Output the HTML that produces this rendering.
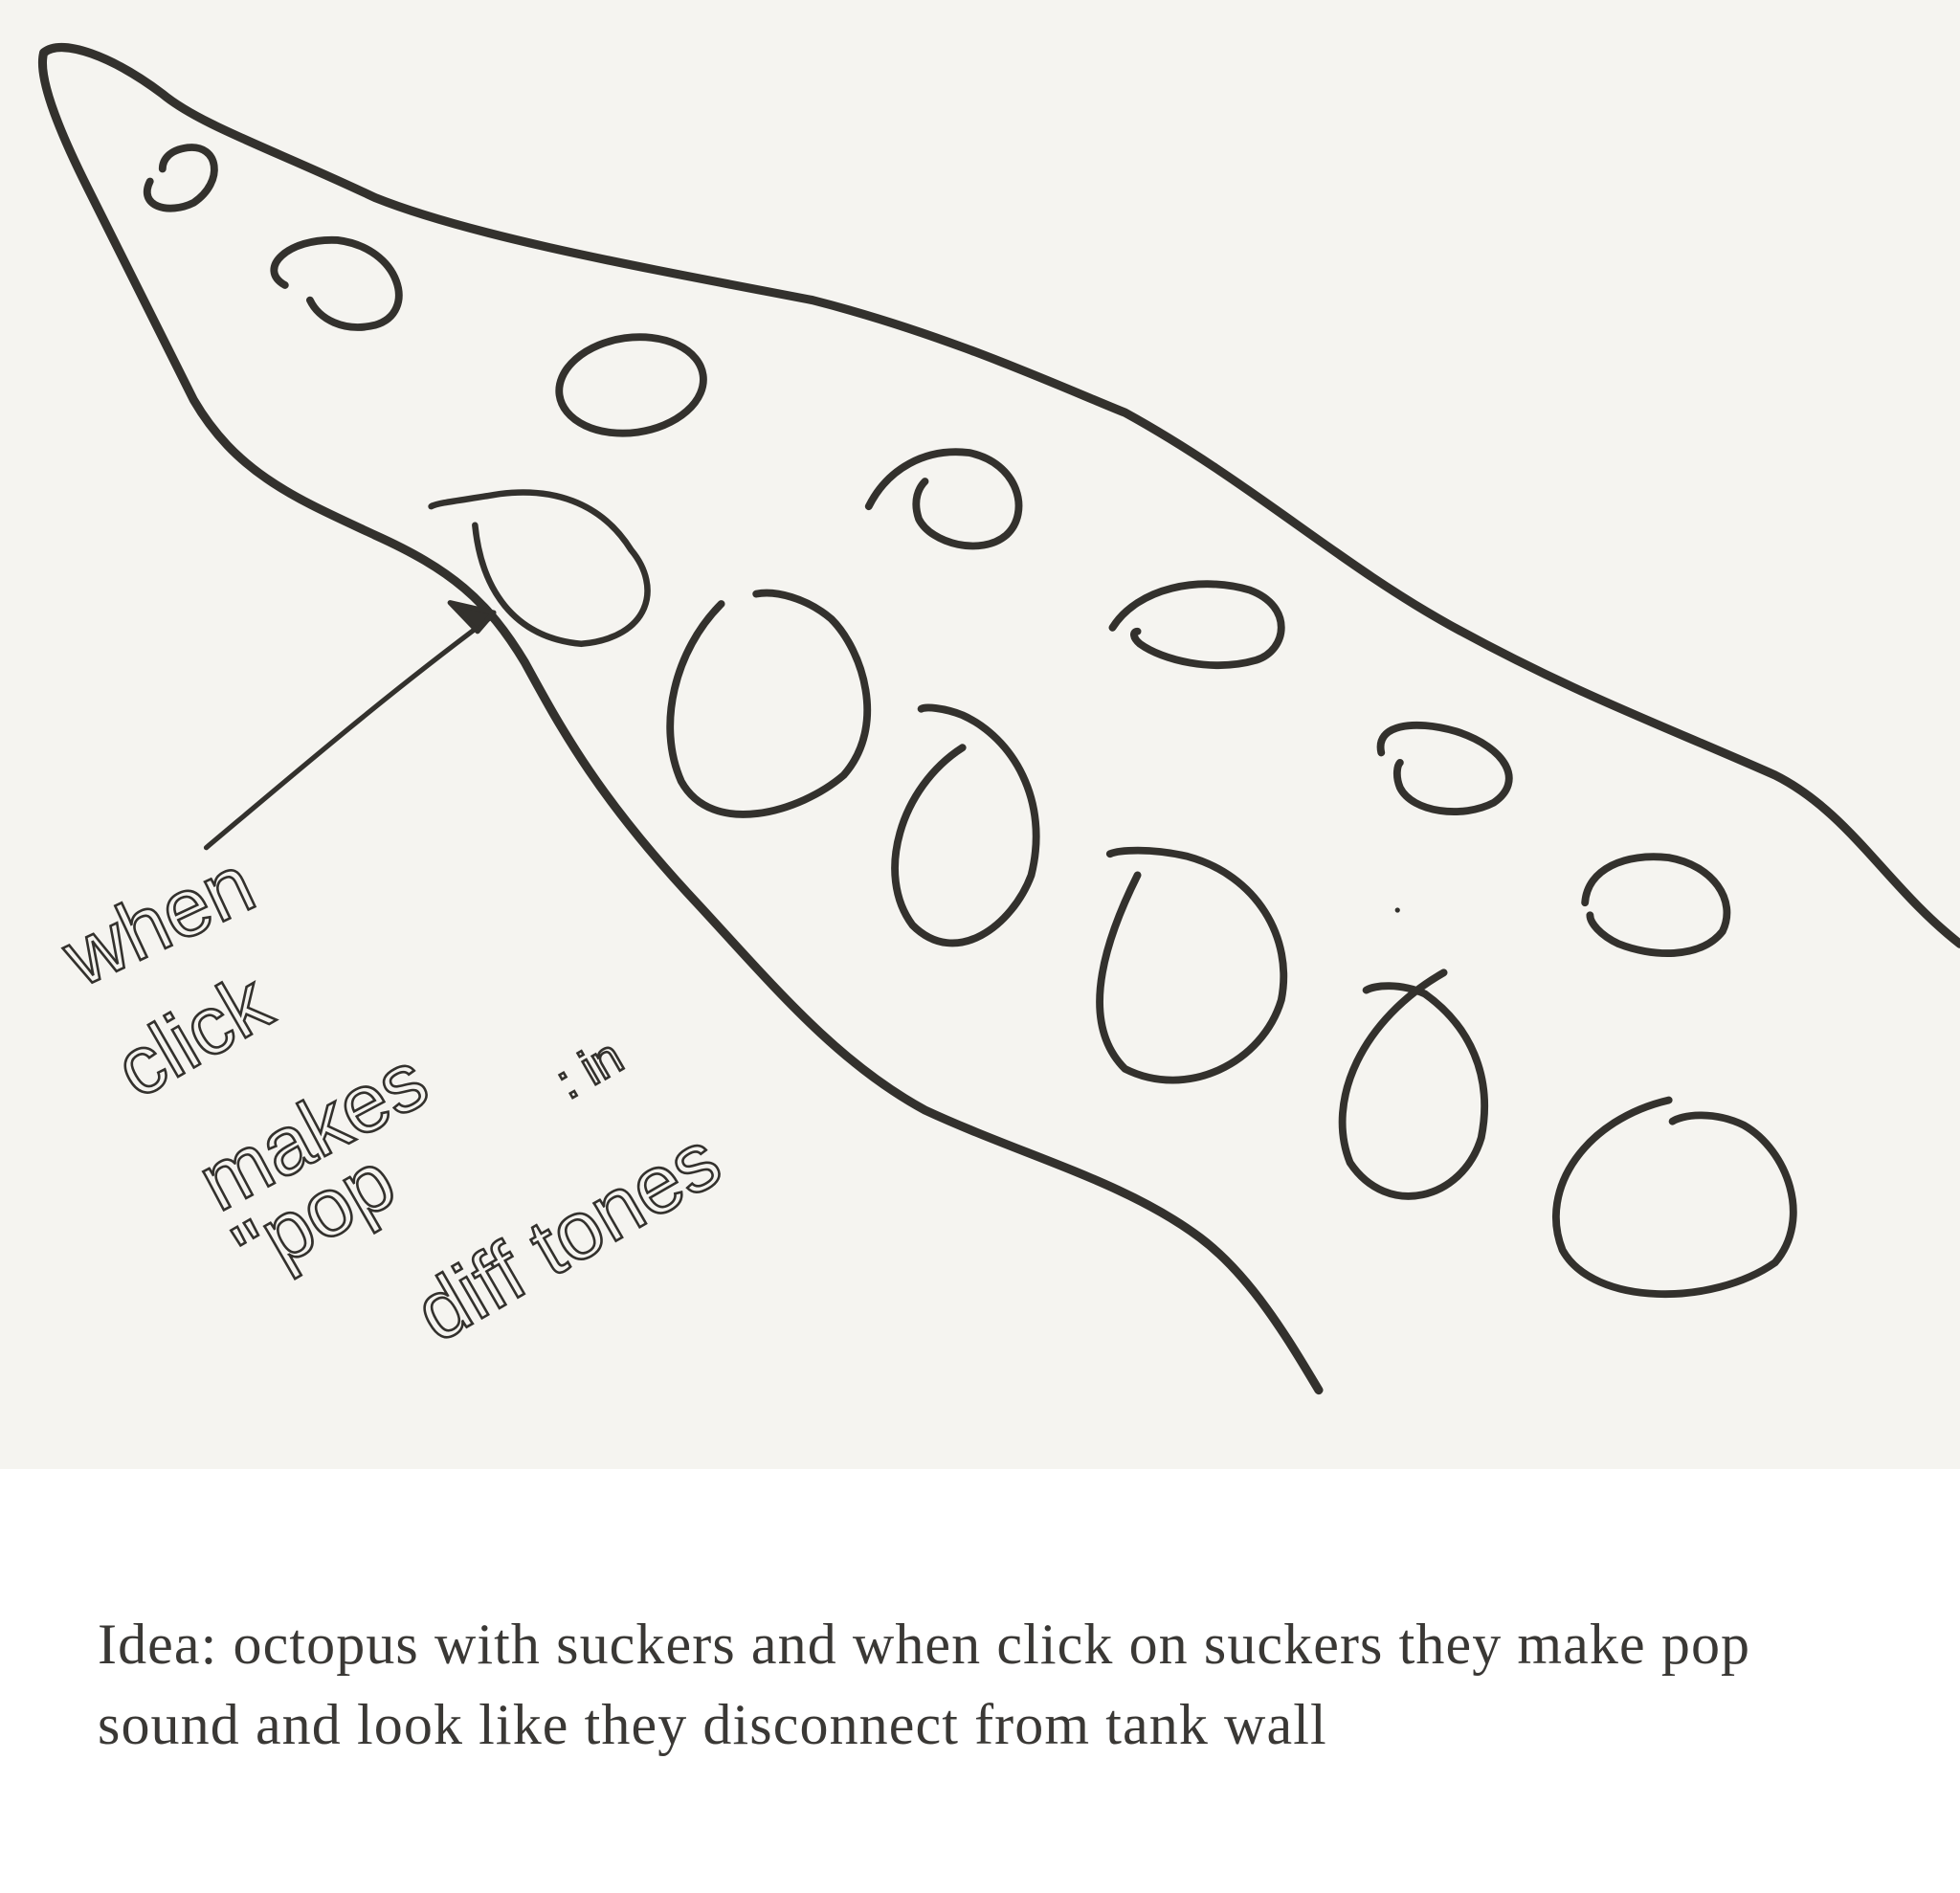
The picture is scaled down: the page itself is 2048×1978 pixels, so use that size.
<!DOCTYPE html>
<html><head><meta charset="utf-8">
<style>
html,body{margin:0;padding:0;background:#fff;width:2048px;height:1978px;overflow:hidden}
.sk{position:absolute;left:0;top:0;width:2048px;height:1535px;background:#f5f4f0}
p{position:absolute;left:102px;top:1676px;margin:0;width:1940px;font-family:"Liberation Serif",serif;font-size:60px;line-height:84px;color:#3a3835;letter-spacing:1.1px}
</style></head><body>
<div class="sk">
<svg width="2048" height="1535" viewBox="0 0 1568 1175" xmlns="http://www.w3.org/2000/svg">
<g fill="none" stroke="#33312d" stroke-linecap="round" stroke-linejoin="round">
<path stroke-width="7" d="M35,42 C50,30 90,45 130,75 C160,100 220,120 300,158 C380,190 520,215 650,240 C760,268 850,310 900,330 C1000,385 1070,450 1160,500 C1260,555 1330,580 1420,620 C1480,650 1510,710 1568,755"/>
<path stroke-width="7" d="M35,42 C30,60 45,100 70,150 C100,210 130,270 155,320 C190,380 240,400 300,428 C360,455 390,480 420,530 C450,585 480,640 560,725 C620,790 670,850 740,888 C820,925 900,945 960,990 C1000,1020 1030,1070 1055,1112" />
<g stroke-width="6">
<path d="M120,145 C110,165 135,172 155,162 C180,145 175,115 150,118 C135,120 130,128 130,135"/>
<path d="M228,228 C205,215 230,190 270,192 C320,198 335,250 300,260 C275,266 255,255 248,240"/>
<ellipse cx="505" cy="308" rx="58" ry="38" transform="rotate(-8 505 308)"/>
<path d="M695,405 C710,375 740,358 775,362 C815,370 825,410 805,428 C785,445 745,435 735,415 C730,400 735,390 740,385"/>
<path d="M380,420 C385,470 410,510 465,515 C520,510 530,470 505,440 C480,400 440,390 400,395 C370,400 350,402 345,405" stroke-width="5"/>
<path d="M577,483 C540,520 525,580 545,625 C570,670 640,650 675,620 C710,580 690,520 665,495 C645,478 620,472 605,475"/>
<path d="M770,598 C720,630 700,700 730,740 C765,775 810,740 825,700 C840,640 810,590 770,572 C755,566 740,565 737,567"/>
<path d="M910,700 C880,760 865,820 900,855 C950,880 1010,850 1025,800 C1035,750 1005,700 950,685 C920,678 895,680 888,683"/>
<path d="M1155,778 C1090,815 1060,880 1080,930 C1110,975 1170,960 1185,910 C1195,860 1175,820 1140,795 C1120,786 1100,788 1093,792"/>
<path d="M1335,880 C1270,895 1230,950 1250,1000 C1275,1045 1370,1045 1420,1010 C1450,975 1430,920 1395,900 C1370,888 1345,892 1338,897"/>
<path d="M890,502 C910,470 960,460 1000,472 C1035,485 1030,520 1005,528 C970,538 930,528 912,515 C906,510 906,505 910,505"/>
<path d="M1105,602 C1100,580 1130,575 1165,585 C1205,598 1220,625 1195,642 C1170,655 1130,650 1120,630 C1116,620 1118,612 1120,610"/>
<path d="M1268,722 C1270,695 1300,682 1335,686 C1370,692 1390,720 1378,745 C1360,768 1320,765 1295,755 C1280,748 1272,738 1272,732"/>
</g>
<path stroke-width="4" d="M165,678 C240,615 310,555 395,492"/>
<path stroke-width="4" fill="#33312d" d="M395,490 L360,482 L382,505 Z"/>
<circle cx="1118" cy="728" r="1.5" fill="#33312d"/>
</g>
<g fill="none" stroke="#33312d" stroke-width="2" font-family="Liberation Sans, sans-serif">
<text x="65" y="790" font-size="66" transform="rotate(-25 65 790)">when</text>
<text x="110" y="880" font-size="66" transform="rotate(-30 110 880)">click</text>
<text x="175" y="970" font-size="66" transform="rotate(-28 175 970)">makes</text>
<text x="455" y="880" font-size="40" transform="rotate(-30 455 880)">: in</text>
<text x="205" y="1025" font-size="66" transform="rotate(-30 205 1025)">"pop</text>
<text x="350" y="1075" font-size="66" transform="rotate(-30 350 1075)">diff tones</text>
</g>
</svg>
</div>
<p>Idea: octopus with suckers and when click on suckers they make pop<br>sound and look like they disconnect from tank wall</p>
</body></html>
